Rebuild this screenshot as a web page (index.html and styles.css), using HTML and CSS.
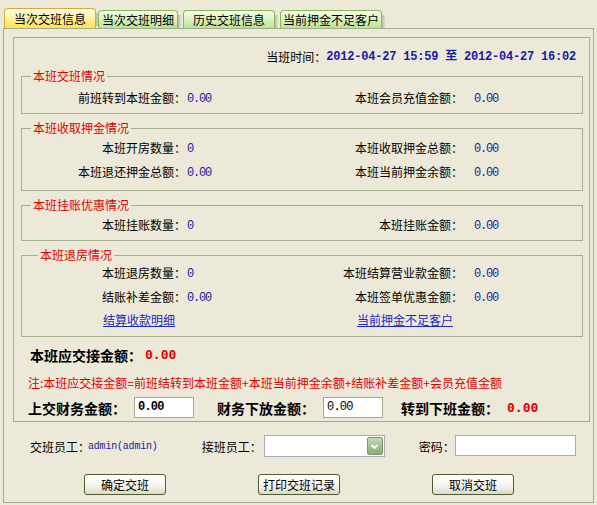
FILE: index.html
```html
<!DOCTYPE html>
<html lang="zh">
<head>
<meta charset="utf-8">
<title>交班</title>
<link rel="stylesheet" href="styles.css">
</head>
<body>
<div class="tabs">
  <div class="tab active">当次交班信息</div>
  <div class="tab t2">当次交班明细</div>
  <div class="tab t3">历史交班信息</div>
  <div class="tab t4">当前押金不足客户</div>
</div>
<div class="panel">
  <div class="inner">
    <div class="timerow">当班时间：<span class="time">2012-04-27 15:59 至 2012-04-27 16:02</span></div>

    <fieldset class="fs fs1">
      <legend>本班交班情况</legend>
      <div class="grid">
        <span class="lbl">前班转到本班金额：</span><span class="val">0.00</span>
        <span class="lbl">本班会员充值金额：</span><span class="val v2">0.00</span>
      </div>
    </fieldset>

    <fieldset class="fs fs2">
      <legend>本班收取押金情况</legend>
      <div class="grid">
        <span class="lbl">本班开房数量：</span><span class="val">0</span>
        <span class="lbl">本班收取押金总额：</span><span class="val v2">0.00</span>
      </div>
      <div class="grid gap8">
        <span class="lbl">本班退还押金总额：</span><span class="val">0.00</span>
        <span class="lbl">本班当前押金余额：</span><span class="val v2">0.00</span>
      </div>
    </fieldset>

    <fieldset class="fs fs3">
      <legend>本班挂账优惠情况</legend>
      <div class="grid">
        <span class="lbl">本班挂账数量：</span><span class="val">0</span>
        <span class="lbl">本班挂账金额：</span><span class="val v2">0.00</span>
      </div>
    </fieldset>

    <fieldset class="fs fs4">
      <legend>本班退房情况</legend>
      <div class="grid">
        <span class="lbl">本班退房数量：</span><span class="val">0</span>
        <span class="lbl">本班结算营业款金额：</span><span class="val v2">0.00</span>
      </div>
      <div class="grid gap8">
        <span class="lbl">结账补差金额：</span><span class="val">0.00</span>
        <span class="lbl">本班签单优惠金额：</span><span class="val v2">0.00</span>
      </div>
      <div class="grid gap7">
        <a class="link l1" href="#">结算收款明细</a><span></span>
        <a class="link l2" href="#">当前押金不足客户</a><span></span>
      </div>
    </fieldset>

    <div class="total"><span class="blbl">本班应交接金额：</span><span class="red">0.00</span></div>
    <div class="note">注:本班应交接金额=前班结转到本班金额+本班当前押金余额+结账补差金额+会员充值金额</div>
    <div class="finrow">
      <span class="blbl">上交财务金额：</span>
      <div class="inp bold">0.00</div>
      <span class="blbl m2">财务下放金额：</span>
      <div class="inp">0.00</div>
      <span class="blbl m3">转到下班金额：</span>
      <span class="red">0.00</span>
    </div>
  </div>

  <div class="emprow">
    <span class="elbl">交班员工：</span><span class="admin">admin(admin)</span>
    <span class="elbl e2">接班员工：</span>
    <div class="select"><span class="dd"><svg width="13" height="13" viewBox="0 0 13 13"><path d="M3.5 5 L6.5 8 L9.5 5" fill="none" stroke="#fff" stroke-width="1.8"/></svg></span></div>
    <span class="elbl e3">密码：</span>
    <div class="pwd"></div>
  </div>

  <div class="btnrow">
    <div class="btn">确定交班</div>
    <div class="btn">打印交班记录</div>
    <div class="btn">取消交班</div>
  </div>
</div>
</body>
</html>
```

FILE: styles.css
```css
* { box-sizing: border-box; }
html, body {
  margin: 0;
  padding: 0;
  background: #ECE9D8;
  font-family: "Noto Sans CJK SC", "DejaVu Sans", sans-serif;
  font-size: 12px;
  color: #000;
}
.tabs {
  display: flex;
  align-items: flex-end;
  height: 28px;
  padding-top: 8px;
  padding-left: 4px;
}
.tab {
  position: relative;
  height: 18px;
  line-height: 17px;
  font-size: 12px;
  border: 1px solid #86B85A;
  border-bottom: none;
  border-radius: 4px 4px 0 0;
  background: linear-gradient(#F6FCEE, #D6F0B8 55%, #BCE294);
  text-align: center;
  white-space: nowrap;
}
.tab::after {
  content: "";
  position: absolute;
  right: -4px;
  top: 4px;
  width: 3px;
  height: 13px;
  background: linear-gradient(90deg, #B8B8A8, #E0DED0);
}
.tab.active {
  height: 20px;
  line-height: 19px;
  width: 92px;
  border-color: #DDA836;
  background: linear-gradient(#FFFDEA, #FFF2A0 50%, #FFE24C);
  margin-right: 2px;
}
.tab.t2 { width: 80px; margin-right: 5px; }
.tab.t3 { width: 92px; margin-right: 5px; }
.tab.t4 { width: 102px; }

.panel {
  margin-left: 3px;
  width: 591px;
  border: 1px solid #A0AE8E;
  padding: 8px 3px 7px 9px;
}
.inner {
  border: 1px solid #A0AE8E;
  padding-bottom: 3px;
}
.timerow {
  margin-top: 12px;
  height: 14px;
  line-height: 14px;
  display: flex;
  justify-content: flex-end;
  padding-right: 13px;
  white-space: nowrap;
}
.time {
  font-family: "Liberation Mono", "Noto Sans CJK SC", monospace;
  font-weight: bold;
  color: #1020A8;
  font-size: 12px;
  letter-spacing: -0.2px;
}
.fs {
  margin: 6px 6px 0 7px;
  padding: 0;
  border: 1px solid #A2B08C;
  min-width: 0;
}
.fs1 { margin-top: 4px; padding-bottom: 7px; }
.fs2 { padding-bottom: 10px; }
.fs3 { padding-bottom: 7px; }
.fs4 { padding-bottom: 8px; }
.fs legend {
  margin-left: 9px;
  padding: 0 2px;
  line-height: 16px;
  height: 16px;
  color: #E00000;
}
.fs4 legend { margin-left: 16px; }
.grid {
  display: grid;
  grid-template-columns: 164px 114px 163px 1fr;
  height: 16px;
  line-height: 16px;
  margin-top: 4px;
  white-space: nowrap;
}
.fs1 .grid { margin-top: 6px; }
.fs4 .grid { margin-top: 2px; }
.fs4 .grid.gap8, .grid.gap8 { margin-top: 8px; }
.fs4 .grid.gap7 { margin-top: 7px; }
.lbl { text-align: right; }
.val {
  padding-left: 1px;
  padding-top: 1px;
  color: #1A1AA8;
  font-family: "Liberation Mono", monospace;
  font-size: 12px;
  letter-spacing: -1.2px;
}
.val.v2 { padding-left: 11px; }
.link {
  color: #1A2ACF;
  text-decoration: underline;
}
.link.l1 { padding-left: 81px; }
.link.l2 { padding-left: 57px; }

.total {
  margin-top: 9px;
  padding-left: 16px;
  height: 18px;
  line-height: 18px;
  display: flex;
  align-items: center;
}
.blbl {
  font-weight: bold;
  font-size: 14px;
  white-space: nowrap;
}
.red {
  color: #E80000;
  font-weight: bold;
  font-family: "DejaVu Sans Mono", monospace;
  font-size: 13px;
  margin-left: 3px;
}
.note {
  margin-top: 11px;
  padding-left: 14px;
  height: 16px;
  line-height: 16px;
  color: #E00000;
  white-space: nowrap;
}
.finrow {
  margin-top: 6px;
  padding-left: 14px;
  height: 21px;
  display: flex;
  align-items: center;
}
.inp {
  margin-left: 8px;
  width: 60px;
  height: 21px;
  line-height: 19px;
  background: #fff;
  border: 1px solid #9CAE8C;
  padding-left: 3px;
  font-family: "Liberation Mono", monospace;
  font-size: 12px;
  letter-spacing: -0.8px;
}
.inp.bold { font-weight: bold; }
.blbl.m2 { margin-left: 23px; }
.blbl.m3 { margin-left: 18px; }
.finrow .red { margin-left: 8px; }

.emprow {
  margin-top: 13px;
  height: 22px;
  display: flex;
  align-items: center;
  padding-left: 17px;
  white-space: nowrap;
}
.admin {
  font-family: "Liberation Mono", monospace;
  font-size: 10px;
  color: #2020A0;
  margin-left: -2px;
  letter-spacing: -0.2px;
}
.elbl.e2 { margin-left: 44px; }
.elbl.e3 { margin-left: 34px; }
.select {
  margin-left: 2px;
  width: 121px;
  height: 22px;
  background: #fff;
  border: 1px solid #A5ACB2;
  position: relative;
}
.dd {
  position: absolute;
  right: 1px;
  top: 1px;
  width: 16px;
  height: 18px;
  border-radius: 2px;
  border: 1px solid #7E9868;
  background: linear-gradient(#C4D8B0, #8EAA74);
  display: flex;
  align-items: center;
  justify-content: center;
}
.pwd {
  margin-left: 0;
  width: 121px;
  height: 21px;
  background: #fff;
  border: 1px solid #A5ACB2;
  align-self: flex-start;
}
.btnrow {
  margin-top: 17px;
  display: flex;
  padding-left: 71px;
  gap: 92px;
}
.btn {
  width: 82px;
  height: 21px;
  line-height: 19px;
  text-align: center;
  border: 1px solid #4F5E2E;
  border-radius: 3px;
  background: linear-gradient(#FFFFFF, #F4F3EC 60%, #DCD8C6);
  white-space: nowrap;
}
```
